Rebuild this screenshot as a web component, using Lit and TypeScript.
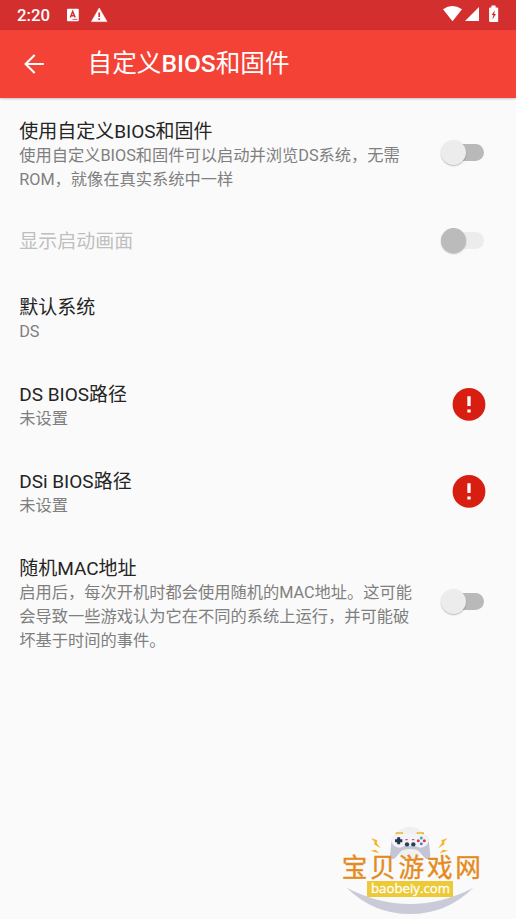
import { LitElement, html, css, svg, nothing } from "lit";
import { customElement, property } from "lit/decorators.js";

type Control = "switch" | "alert" | "none";

interface Pref {
  title: string;
  lines: string[];
  control: Control;
  disabled?: boolean;
}

const PREFS: Pref[] = [
  {
    title: "使用自定义BIOS和固件",
    lines: ["使用自定义BIOS和固件可以启动并浏览DS系统，无需", "ROM，就像在真实系统中一样"],
    control: "switch",
  },
  { title: "显示启动画面", lines: [], control: "switch", disabled: true },
  { title: "默认系统", lines: ["DS"], control: "none" },
  { title: "DS BIOS路径", lines: ["未设置"], control: "alert" },
  { title: "DSi BIOS路径", lines: ["未设置"], control: "alert" },
  {
    title: "随机MAC地址",
    lines: [
      "启用后，每次开机时都会使用随机的MAC地址。这可能",
      "会导致一些游戏认为它在不同的系统上运行，并可能破",
      "坏基于时间的事件。",
    ],
    control: "switch",
  },
];

@customElement("status-bar")
class StatusBar extends LitElement {
  static styles = css`
    :host {
      display: flex;
      justify-content: space-between;
      height: 30px;
      background: #d32f2f;
      color: #fff;
    }
    .time {
      font-size: 16.8px;
      font-weight: 500;
      line-height: 31px;
      padding-left: 17px;
      width: 49px;
    }
    .side {
      display: flex;
    }
    svg {
      display: block;
      fill: #fff;
    }
  `;
  render() {
    return html`
      <div class="side">
        <div class="time">2:20</div>
        <svg width="44" height="30" viewBox="66 0 44 30">
          <rect x="67" y="8.8" width="11.8" height="12.4" rx="1" />
          <path d="M70.3 17.6 72.7 11.4 75.2 17.6M71.2 15.8H74.2" fill="none" stroke="#d32f2f" stroke-width="1.4" />
          <path d="M72.5 19.4H77.5" stroke="#d32f2f" stroke-width=".8" />
          <path d="M99.2 8 107 21.6H91.4Z" stroke="#fff" stroke-width=".5" stroke-linejoin="round" />
          <path d="M99.2 12.4V17M99.2 18.3V20" stroke="#d32f2f" stroke-width="1.7" />
        </svg>
      </div>
      <svg width="76" height="30" viewBox="440 0 76 30">
        <path d="M443 9.2Q452.3 3 462 9.2L452.5 21.2Z" />
        <path d="M479 7V21H465Z" />
        <path d="M491.4 5.6h4.2v1.9h1.6q1 0 1 1v12.6q0 1-1 1h-7.1q-1 0-1-1V8.5q0-1 1-1h1.3z" />
        <path d="M494.9 10.2 491.6 15h1.7l-.9 4.4 3.6-5.4h-1.8z" fill="#d32f2f" />
      </svg>
    `;
  }
}

@customElement("app-bar")
class AppBar extends LitElement {
  static styles = css`
    :host {
      display: flex;
      align-items: center;
      height: 67.5px;
      background: #f44336;
      color: #fff;
      box-shadow: 0 1px 2px rgba(0, 0, 0, 0.22);
    }
    .back {
      flex: none;
      width: 87.6px;
      height: 30px;
      fill: none;
      stroke: #fff;
      stroke-width: 2.1;
    }
    .title {
      font-size: 24.6px;
      line-height: 30px;
      padding-top: 1px;
      white-space: nowrap;
    }
    .latin {
      font-weight: 500;
    }
  `;
  render() {
    return html`
      <svg class="back" viewBox="0 0 88 30"><path d="M44 15H26M34.8 5.9 25.7 15 34.8 24.1" /></svg>
      <div class="title">自定义<span class="latin">BIOS</span>和固件</div>
    `;
  }
}

@customElement("toggle-switch")
class ToggleSwitch extends LitElement {
  @property({ type: Boolean }) disabled = false;
  static styles = css`
    :host {
      display: flex;
      align-items: center;
      width: 43px;
      height: 26px;
    }
    .track {
      display: flex;
      align-items: center;
      width: 38px;
      height: 17px;
      margin-left: 5px;
      border-radius: 9px;
      background: #b9b9b9;
    }
    .thumb {
      flex: none;
      width: 25px;
      height: 25px;
      margin-left: -5px;
      border-radius: 50%;
      background: #ececec;
      box-shadow: 0 1px 1.5px rgba(0, 0, 0, 0.25);
    }
    .off {
      background: #ececec;
    }
    .off .thumb {
      background: #bbb;
    }
  `;
  render() {
    return html`<div class="track ${this.disabled ? "off" : ""}"><div class="thumb"></div></div>`;
  }
}

@customElement("pref-row")
class PrefRow extends LitElement {
  @property({ attribute: false }) pref!: Pref;
  static styles = css`
    :host {
      display: block;
    }
    .row {
      display: flex;
      align-items: center;
      justify-content: space-between;
      box-sizing: border-box;
      min-height: 65px;
      padding: 21px 31.8px 18px 19.2px;
    }
    .title {
      font-size: 19px;
      line-height: 24px;
      color: #242424;
      white-space: nowrap;
    }
    .line {
      font-size: 16.25px;
      line-height: 24px;
      color: #7f7f7f;
      white-space: nowrap;
    }
    .disabled {
      padding-top: 20px;
      padding-bottom: 20px;
    }
    .disabled .title {
      color: #bfbfbf;
    }
    .control {
      flex: none;
      margin: -10px 0 -5px;
    }
    .switch {
      margin-top: -11px;
    }
    .disabled .switch {
      margin-top: -9px;
    }
    .alert {
      display: block;
      margin-right: -2px;
    }
  `;
  private control() {
    const p = this.pref;
    if (p.control === "switch")
      return html`<toggle-switch class="control switch" ?disabled=${!!p.disabled}></toggle-switch>`;
    if (p.control === "alert")
      return html`<svg class="control alert" width="34" height="34" viewBox="0 0 34 34">
        <circle cx="17" cy="17.4" r="16.4" fill="#d81e10" />
        <path d="M17 9.2V19M17 22.4V25.6" stroke="#fff" stroke-width="3.3" />
      </svg>`;
    return nothing;
  }
  render() {
    const p = this.pref;
    return html`<div class="row ${p.disabled ? "disabled" : ""}">
      <div>
        <div class="title">${p.title}</div>
        ${p.lines.map((l) => html`<div class="line">${l}</div>`)}
      </div>
      ${this.control()}
    </div>`;
  }
}

@customElement("site-badge")
class SiteBadge extends LitElement {
  static styles = css`
    :host {
      display: block;
    }
    svg {
      display: block;
    }
    .name {
      font: 400 77px "Liberation Sans", "Noto Sans CJK SC", sans-serif;
      fill: #e58a20;
      stroke: #e58a20;
      stroke-width: 1;
    }
    .url {
      font: 500 40px "Open Sans", "Noto Sans", sans-serif;
      fill: #fff;
      stroke: #fff;
      stroke-width: 0.8;
    }
  `;
  private bolt(transform: string) {
    return svg`<path transform=${transform} fill="#f5b52d" d="M123 69 142 76 140 84 152 100 132 88 134 81Z M122 107 137 104 147 115 134 111Z" />`;
  }
  render() {
    return html`<svg width="160" height="104" viewBox="0 0 480 312">
      <circle cx="240" cy="84" r="49" fill="#f0f0f1" />
      <path d="M50 218Q240 316 430 218Q350 297 240 297Q130 297 50 218Z" fill="#c9cbd9" />
      ${this.bolt("")} ${this.bolt("translate(476 0) scale(-1 1)")}
      <path d="M199 58V54H217V58M262 58V54H280V58" fill="none" stroke="#edb52e" stroke-width="4" />
      <path d="M204 57H276Q296 60 297 82L301 122Q299 134 288 132Q280 126 270 112Q262 102 240 102Q218 102 210 112Q200 126 192 132Q181 134 180 122L184 82Q185 60 204 57Z" fill="#c3c5d5" />
      <path d="M204 57H276Q296 61 296 79Q291 96 272 98Q262 97 256 92H224Q218 97 208 98Q189 96 184 79Q185 61 204 57Z" fill="#f3f3f8" />
      <path d="M206 67V88M195 77.5H217" stroke="#20364a" stroke-width="9" />
      <circle cx="231" cy="88" r="6.5" fill="#263f52" />
      <circle cx="250" cy="88" r="6.5" fill="#263f52" />
      <path d="M226 74H233M246 74H253" stroke="#d64c68" stroke-width="3.5" />
      <circle cx="274" cy="69" r="4.5" fill="#3aa9b8" />
      <circle cx="274" cy="86" r="4.5" fill="#4a86c8" />
      <circle cx="265" cy="77.5" r="4.5" fill="#d63a58" />
      <circle cx="283" cy="77.5" r="4.5" fill="#d83a3a" />
      <text class="name" x="35" y="187" textLength="418" lengthAdjust="spacing">宝贝游戏网</text>
      <rect x="111" y="198" width="258" height="48" fill="#edca35" />
      <text class="url" x="123" y="235" textLength="237" lengthAdjust="spacingAndGlyphs">baobeiy.com</text>
    </svg>`;
  }
}

@customElement("app-root")
class AppRoot extends LitElement {
  static styles = css`
    :host {
      display: block;
      position: relative;
      height: 919px;
      overflow: hidden;
      background: #fafafa;
      font-family: Roboto, "Noto Sans CJK SC", sans-serif;
    }
    .list {
      padding-top: 1.2px;
    }
    .badge {
      position: absolute;
      left: 330px;
      top: 815px;
    }
  `;
  render() {
    return html`
      <status-bar></status-bar>
      <app-bar></app-bar>
      <div class="list">${PREFS.map((p) => html`<pref-row .pref=${p}></pref-row>`)}</div>
      <site-badge class="badge"></site-badge>
    `;
  }
}
